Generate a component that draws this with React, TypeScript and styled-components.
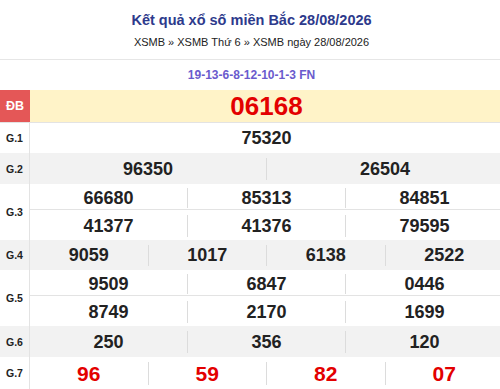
import React from "react";
import styled, { createGlobalStyle } from "styled-components";

const GlobalStyle = createGlobalStyle`
  html, body {
    margin: 0;
    padding: 0;
    background: #fff;
    overflow: hidden;
  }
  body {
    font-family: "Liberation Sans", Arial, sans-serif;
    color: #222;
  }
`;

type Prize = {
  label: string;
  cols: number;
  nums: string[];
  heights: number[];
  red?: boolean;
};

const prizes: Prize[] = [
  { label: "G.1", cols: 1, nums: ["75320"], heights: [30] },
  { label: "G.2", cols: 2, nums: ["96350", "26504"], heights: [31] },
  {
    label: "G.3",
    cols: 3,
    nums: ["66680", "85313", "84851", "41377", "41376", "79595"],
    heights: [25, 31],
  },
  { label: "G.4", cols: 4, nums: ["9059", "1017", "6138", "2522"], heights: [30] },
  {
    label: "G.5",
    cols: 3,
    nums: ["9509", "6847", "0446", "8749", "2170", "1699"],
    heights: [25, 31],
  },
  { label: "G.6", cols: 3, nums: ["250", "356", "120"], heights: [31] },
  { label: "G.7", cols: 4, nums: ["96", "59", "82", "07"], heights: [32], red: true },
];

const chunk = (arr: string[], size: number) => {
  const out: string[][] = [];
  for (let i = 0; i < arr.length; i += size) out.push(arr.slice(i, i + size));
  return out;
};

const App: React.FC = () => {
  return (
    <Wrapper>
      <GlobalStyle />
      <Header>
        <Title>Kết quả xổ số miền Bắc 28/08/2026</Title>
        <Crumbs>XSMB » XSMB Thứ 6 » XSMB ngày 28/08/2026</Crumbs>
      </Header>
      <Code>19-13-6-8-12-10-1-3 FN</Code>
      <SpecialRow>
        <SpecialLabel>ĐB</SpecialLabel>
        <SpecialNumber>06168</SpecialNumber>
      </SpecialRow>
      {prizes.map((p, i) => (
        <PrizeRow key={p.label} $gray={i % 2 === 1}>
          <Label>{p.label}</Label>
          <Lines>
            {chunk(p.nums, p.cols).map((line, j) => (
              <Line key={`${p.label}_${j}`} $h={p.heights[j]}>
                {line.map((n, k) => (
                  <Cell key={`${p.label}_${j}_${k}`} $red={p.red}>
                    {n}
                  </Cell>
                ))}
              </Line>
            ))}
          </Lines>
        </PrizeRow>
      ))}
    </Wrapper>
  );
};

export default App;

const Wrapper = styled.div`
  width: 503px;
  display: flex;
  flex-direction: column;
`;

const Header = styled.div`
  display: flex;
  flex-direction: column;
  align-items: center;
  padding: 10px 0 10px;
  border-bottom: 1px solid #e6e6e6;
`;

const Title = styled.h1`
  margin: 0;
  font-size: 14.5px;
  line-height: 21px;
  font-weight: 700;
  color: #2d3a8c;
`;

const Crumbs = styled.div`
  margin-top: 4px;
  font-size: 11px;
  line-height: 14px;
  color: #222;
`;

const Code = styled.div`
  height: 30px;
  display: flex;
  align-items: center;
  justify-content: center;
  font-size: 12px;
  font-weight: 700;
  color: #6a5acd;
`;

const SpecialRow = styled.div`
  display: flex;
  height: 33px;
  border-bottom: 1px solid #e3e3e3;
  box-sizing: border-box;
`;

const SpecialLabel = styled.div`
  width: 30px;
  display: flex;
  align-items: center;
  justify-content: center;
  background: #e45757;
  color: #fff;
  font-size: 12.5px;
  font-weight: 700;
`;

const SpecialNumber = styled.div`
  flex: 1;
  display: flex;
  align-items: center;
  justify-content: center;
  background: #fff3c8;
  color: #e30000;
  font-size: 26px;
  font-weight: 700;
`;

const PrizeRow = styled.div<{ $gray: boolean }>`
  display: flex;
  background: ${(p) => (p.$gray ? "#f2f2f2" : "#fff")};
`;

const Label = styled.div`
  width: 29px;
  flex-shrink: 0;
  border-right: 1px solid #e3e3e3;
  display: flex;
  align-items: center;
  justify-content: center;
  font-size: 10.5px;
  font-weight: 700;
  color: #222;
`;

const Lines = styled.div`
  flex: 1;
  display: flex;
  flex-direction: column;
`;

const Line = styled.div<{ $h: number }>`
  display: flex;
  box-sizing: border-box;
  height: ${(p) => p.$h}px;
  padding: 5px 0 4px;

  &:first-child:not(:last-child) {
    padding: 4px 0 1px;
  }

  & + & {
    border-top: 1px solid #e3e3e3;
    padding: 5px 0 3px;
  }
`;

const Cell = styled.div<{ $red?: boolean }>`
  flex: 1 1 0;
  display: flex;
  align-items: center;
  justify-content: center;
  font-weight: 700;
  font-size: ${(p) => (p.$red ? "21px" : "18px")};
  color: ${(p) => (p.$red ? "#e30000" : "#222")};

  & + & {
    border-left: 1px solid #dcdcdc;
  }
`;
